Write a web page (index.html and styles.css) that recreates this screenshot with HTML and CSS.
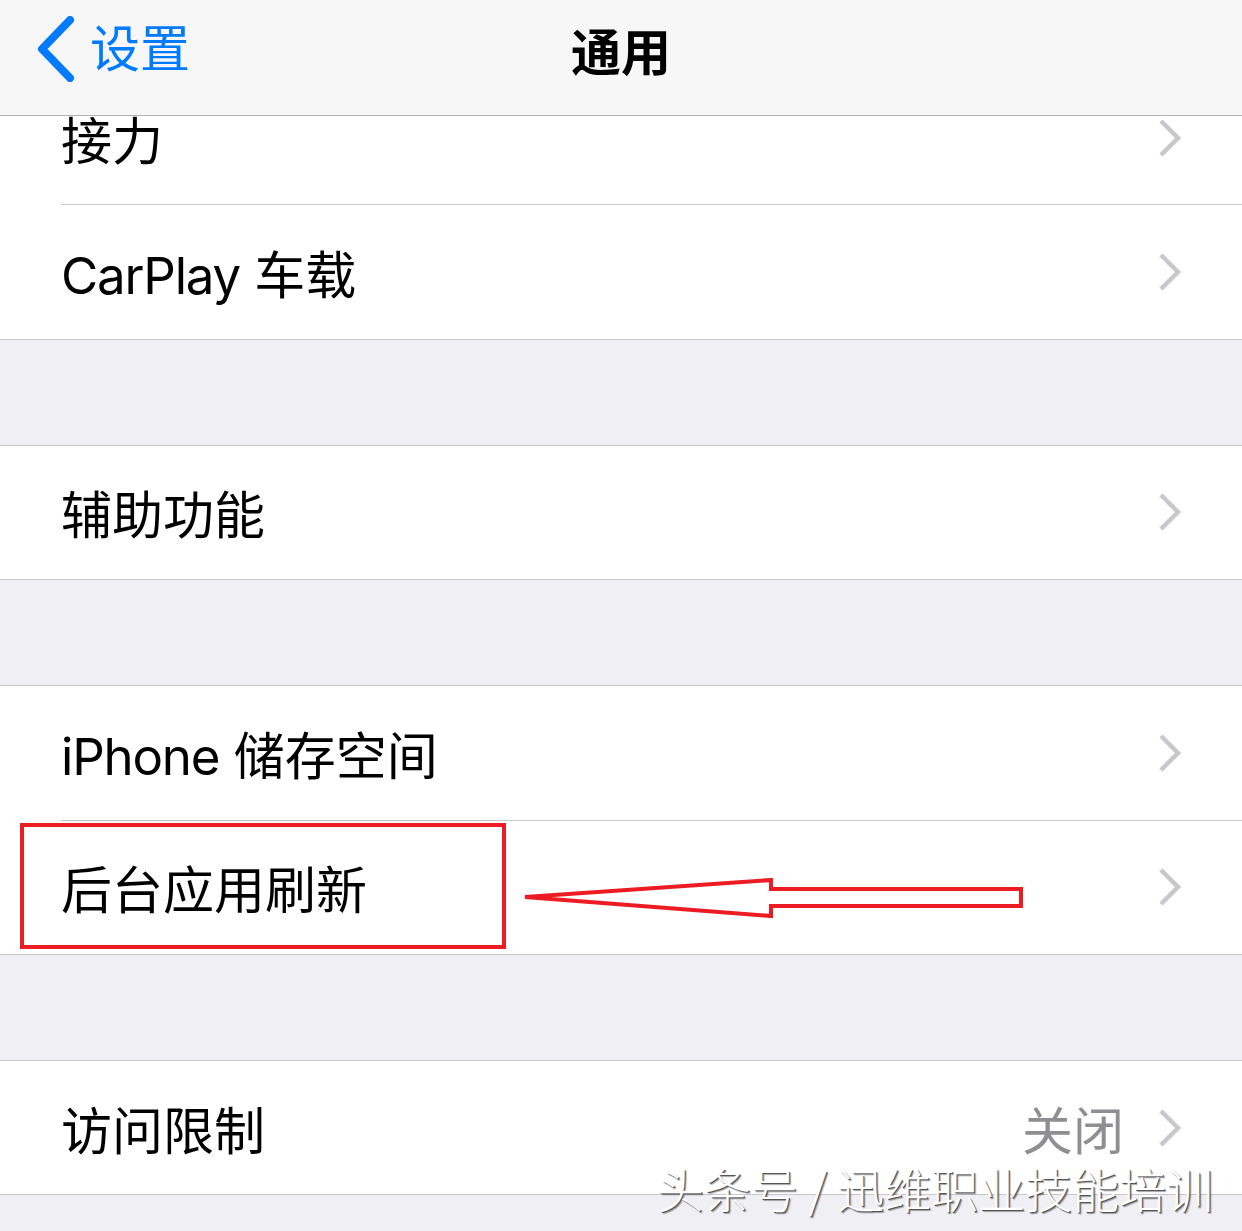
FILE: index.html
```html
<!DOCTYPE html>
<html lang="zh-CN">

<head>
    <meta charset="UTF-8">
    <meta name="viewport" content="width=device-width, initial-scale=1.0">
    <title>通用</title>
    <link rel="stylesheet" href="styles.css">
</head>

<body>
    <div class="navbar">
        <div class="back">
            <svg class="back-icon" width="40" height="66" viewBox="0 0 40 66">
                <polyline points="34,4 6,33 34,62" fill="none" stroke="#007aff" stroke-width="8" stroke-linecap="round" stroke-linejoin="round"/>
            </svg>
            <span class="back-text">设置</span>
        </div>
        <div class="title">通用</div>
    </div>

    <div class="list">
        <div class="group first">
            <div class="row">
                <span class="lbl">接力</span>
                <svg class="chev" width="24" height="38" viewBox="0 0 24 38"><polyline points="3,2 20,19 3,36" fill="none" stroke="#c7c7cc" stroke-width="4.5"/></svg>
            </div>
            <div class="row">
                <span class="lbl"><span class="latin">CarPlay</span> 车载</span>
                <svg class="chev" width="24" height="38" viewBox="0 0 24 38"><polyline points="3,2 20,19 3,36" fill="none" stroke="#c7c7cc" stroke-width="4.5"/></svg>
            </div>
        </div>

        <div class="group">
            <div class="row">
                <span class="lbl">辅助功能</span>
                <svg class="chev" width="24" height="38" viewBox="0 0 24 38"><polyline points="3,2 20,19 3,36" fill="none" stroke="#c7c7cc" stroke-width="4.5"/></svg>
            </div>
        </div>

        <div class="group">
            <div class="row">
                <span class="lbl"><span class="latin">iPhone</span> 储存空间</span>
                <svg class="chev" width="24" height="38" viewBox="0 0 24 38"><polyline points="3,2 20,19 3,36" fill="none" stroke="#c7c7cc" stroke-width="4.5"/></svg>
            </div>
            <div class="row marked">
                <span class="lbl">后台应用刷新</span>
                <svg class="chev" width="24" height="38" viewBox="0 0 24 38"><polyline points="3,2 20,19 3,36" fill="none" stroke="#c7c7cc" stroke-width="4.5"/></svg>
                <div class="mark-box"></div>
                <svg class="mark-arrow" width="510" height="44" viewBox="0 0 510 44">
                    <polygon points="4,19 250,2 250,11 500,11 500,28 250,28 250,38" fill="none" stroke="#ed1c24" stroke-width="4"/>
                </svg>
            </div>
        </div>

        <div class="group">
            <div class="row">
                <span class="lbl">访问限制</span>
                <span class="detail">关闭</span>
                <svg class="chev" width="24" height="38" viewBox="0 0 24 38"><polyline points="3,2 20,19 3,36" fill="none" stroke="#c7c7cc" stroke-width="4.5"/></svg>
            </div>
        </div>

        <div class="watermark">头条号 / 迅维职业技能培训</div>
    </div>
</body>

</html>
```

FILE: styles.css
```css
body{
    margin: 0;
    background-color: #efeff4;
    font-family: Inter, "Noto Sans CJK SC", sans-serif;
    color: #000;
}
.navbar{
    height: 115px;
    background-color: #f7f7f7;
    border-bottom: 1px solid #b2b2b2;
    display: flex;
    align-items: center;
    justify-content: center;
    position: relative;
    z-index: 2;
}
.back{
    position: absolute;
    left: 36px;
    top: 16px;
    display: flex;
    align-items: center;
    gap: 14px;
    color: #007aff;
}
.back-text{
    font-size: 50px;
    line-height: 66px;
}
.title{
    font-size: 50px;
    font-weight: 700;
    margin-top: -18px;
}
.list{
    height: 1115px;
    overflow: hidden;
    position: relative;
}
.group{
    background-color: #fff;
    border-top: 1px solid #c8c7cc;
    border-bottom: 1px solid #c8c7cc;
    margin-top: 105px;
}
.group.first{
    margin-top: -45px;
    border-top: none;
}
.row{
    height: 133.4px;
    display: flex;
    align-items: center;
    padding: 0 60px 0 61px;
    position: relative;
}
.row + .row{
    border-top: 1px solid #c8c7cc;
    margin-left: 61px;
    padding-left: 0;
}
.lbl{
    font-size: 51px;
    flex: 1;
    white-space: nowrap;
}
.latin{
    letter-spacing: -1.2px;
}
.detail{
    font-size: 51px;
    color: #8e8e93;
    margin-right: 34px;
}
.chev{
    display: block;
}
.mark-box{
    position: absolute;
    left: -41px;
    top: 2px;
    width: 478px;
    height: 118px;
    border: 4px solid #ed1c24;
}
.mark-arrow{
    position: absolute;
    left: 460px;
    top: 57px;
}
.watermark{
    position: absolute;
    left: 657px;
    top: 1037px;
    font-size: 47px;
    color: #fff;
    font-family: "Noto Sans CJK SC", sans-serif;
    font-weight: 300;
    text-shadow: 1px 1px 0 #555, 2px 2px 1px rgba(0,0,0,0.35);
    white-space: nowrap;
}
```
